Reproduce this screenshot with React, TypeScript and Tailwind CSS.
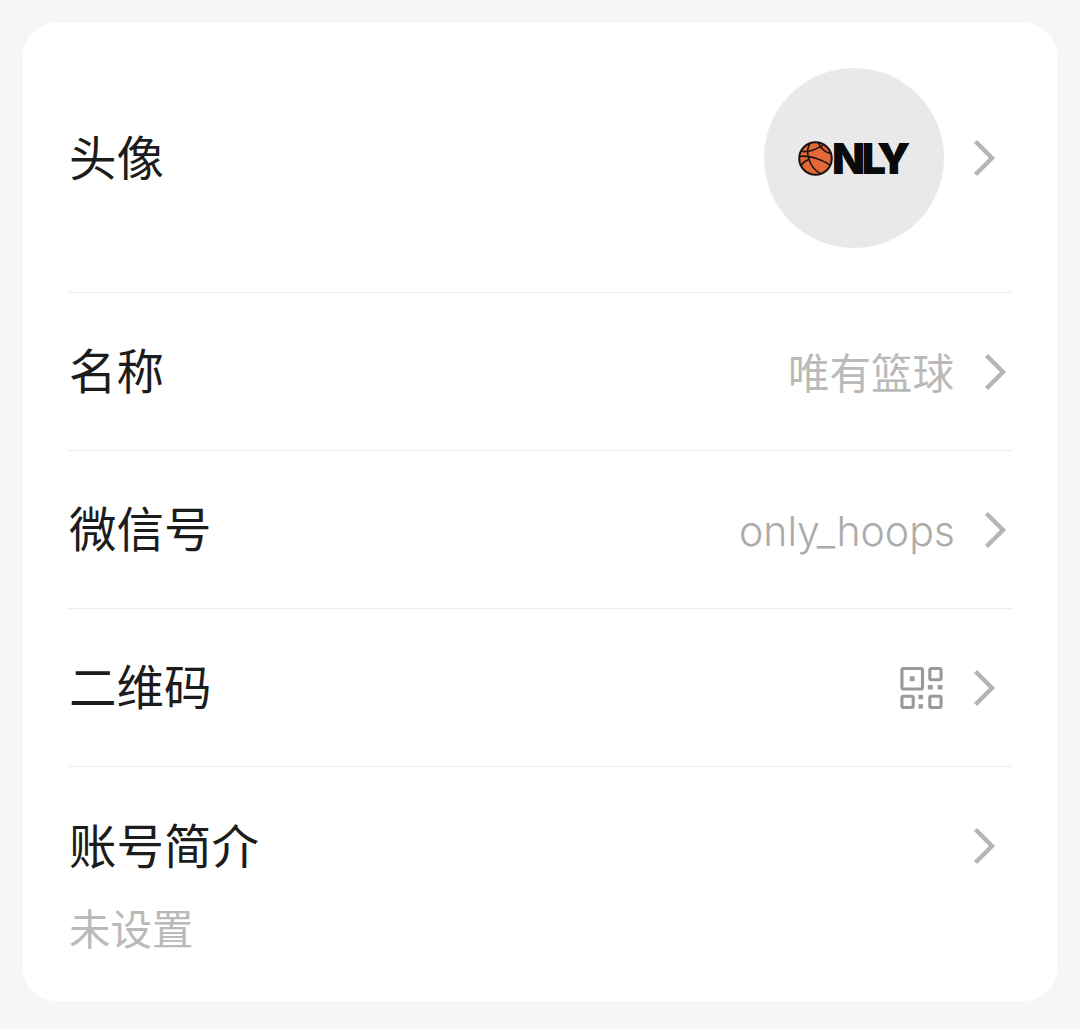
const FONT = "font-['Noto_Sans_CJK_SC','Noto_Sans',sans-serif]";

function Chevron({ className = "" }: { className?: string }) {
  return (
    <svg width="24" height="38" viewBox="0 0 24 38" fill="none" className={className}>
      <path d="M3.5 2.5 L20 19 L3.5 35.5" stroke="#b5b5b5" strokeWidth="4.4" />
    </svg>
  );
}

function Qr() {
  return (
    <svg width="43" height="44" viewBox="0 0 44 44" fill="none" stroke="#9a9a9a" strokeWidth="3.2">
      <rect x="2" y="2" width="21" height="21" rx="1.5" />
      <rect x="10" y="10" width="5" height="5" fill="#9a9a9a" stroke="none" />
      <rect x="30.5" y="2" width="11.5" height="11.5" rx="1.5" />
      <rect x="2" y="30.5" width="11.5" height="11.5" rx="1.5" />
      <rect x="30.5" y="30.5" width="11.5" height="11.5" rx="1.5" />
      <rect x="28.5" y="19" width="5" height="4.5" fill="#9a9a9a" stroke="none" />
      <rect x="38.5" y="19" width="5" height="4.5" fill="#9a9a9a" stroke="none" />
      <rect x="19" y="29" width="4.5" height="4.5" fill="#9a9a9a" stroke="none" />
      <rect x="19" y="38.5" width="4.5" height="4.5" fill="#9a9a9a" stroke="none" />
    </svg>
  );
}

function Ball() {
  return (
    <svg width="35" height="35" viewBox="0 0 34 34" fill="none" stroke="#1a1410" strokeWidth="1.5">
      <circle cx="17" cy="17" r="15.8" fill="#e2683a" strokeWidth="2" />
      <path d="M3.5 10 C11 11.5 18 8 25 3.5" />
      <path d="M1.5 15 C10 13.5 23 18 31.5 23.5" />
      <path d="M12 1.8 C7 9 9 24 22 32" />
      <path d="M19.5 1.5 C22.5 7.5 27 11.5 33 12.5" />
      <path d="M3 23.5 C5.5 20 8.5 18.5 11.5 17.5" />
    </svg>
  );
}

const labelCls = "text-[47.5px] leading-none text-[#1c1c1c] font-normal ml-[1px] mb-[5px]";
const valueCls = "text-[41.5px] leading-none text-[#bababa] font-normal";

function Row({ label, children }: { label: string; children?: React.ReactNode }) {
  return (
    <div className="h-[158px] flex items-center justify-between border-b border-[#ececec]">
      <span className={labelCls}>{label}</span>
      <div className="flex items-center">{children}</div>
    </div>
  );
}

export default function App() {
  return (
    <div className={`w-[1080px] h-[1029px] bg-[#f5f6f6] pt-[23px] pl-[23px] ${FONT}`}>
      <div className="w-[1034px] h-[978px] bg-white rounded-[32px] px-[45px]">
        <div className="h-[270px] pt-[1px] flex items-center justify-between border-b border-[#ececec]">
          <span className={labelCls}>头像</span>
          <div className="flex items-center mr-[16px]">
            <div className="w-[180px] h-[180px] rounded-full bg-[#e9e9e9] flex items-center justify-center pr-[6px] mr-[28px]">
              <Ball />
              <span className="font-['Inter',sans-serif] font-black text-[43px] leading-none tracking-[-3.4px] text-[#0a0a0a] ml-[-1px] mr-[-3px]">NLY</span>
            </div>
            <Chevron />
          </div>
        </div>
        <Row label="名称">
          <span className={`${valueCls} mr-[29px]`}>唯有篮球</span>
          <Chevron className="mr-[5px]" />
        </Row>
        <Row label="微信号">
          <span className="font-['Inter',sans-serif] font-light text-[41px] leading-none text-[#ababab] mr-[28px] mt-[4px]">only_hoops</span>
          <Chevron className="mr-[5px]" />
        </Row>
        <Row label="二维码">
          <Qr />
          <div className="w-[29px]" />
          <Chevron className="mr-[16px]" />
        </Row>
        <div className="pt-[53px] flex flex-col">
          <div className="flex items-center justify-between">
            <span className="text-[47.5px] leading-none text-[#1c1c1c] font-normal ml-[1px] mb-[4px]">账号简介</span>
            <Chevron className="mr-[16px]" />
          </div>
          <span className={`${valueCls} mt-[35px] ml-[1px]`}>未设置</span>
        </div>
      </div>
    </div>
  );
}
